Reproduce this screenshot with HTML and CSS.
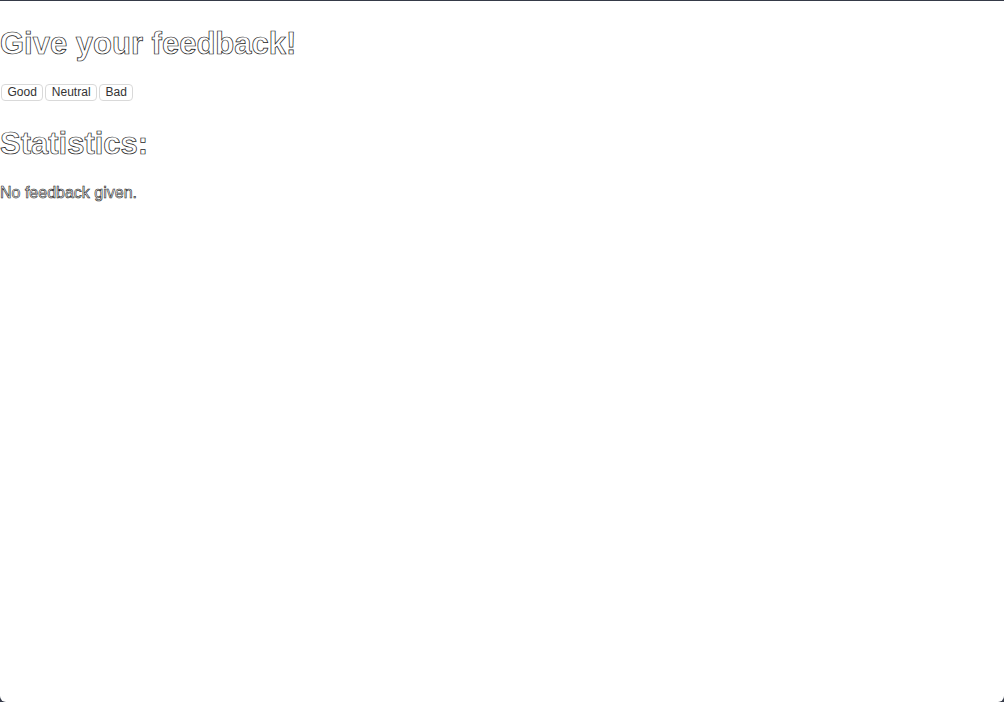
FILE: index.html
```html
<!DOCTYPE html>
<html>
<head>
<meta charset="utf-8">
<link rel="stylesheet" href="styles.css">
</head>
<body>
<div class="page">
  <h1 class="title">Give your feedback!</h1>
  <div class="buttons">
    <button class="btn">Good</button>
    <button class="btn">Neutral</button>
    <button class="btn">Bad</button>
  </div>
  <h1 class="title">Statistics:</h1>
  <p class="text">No feedback given.</p>
</div>
</body>
</html>
```
FILE: styles.css
```css
html, body {
  margin: 0;
  padding: 0;
  background: #353a48;
  height: 100%;
}
.page {
  margin-top: 1px;
  padding-top: 3px;
  height: 701px;
  box-sizing: border-box;
  background: #ffffff;
  border-radius: 0 0 6px 6px;
  overflow: hidden;
  font-family: "Liberation Sans", Arial, sans-serif;
  display: flow-root;
}
.title {
  font-size: 31px;
  font-weight: bold;
  margin: 21px 0 22px;
  color: #ffffff;
  -webkit-text-stroke: 0.7px #1a1a1a;
  line-height: 37px;
}
.buttons {
  display: flex;
  gap: 2px;
  padding-left: 1px;
  padding-bottom: 3px;
}
.btn {
  font-family: "Liberation Sans", Arial, sans-serif;
  font-size: 12px;
  color: #333;
  background: #fff;
  border: 1px solid #d9d9d9;
  border-radius: 4px;
  padding: 0 5.5px;
  height: 17px;
  line-height: 15px;
}
.text {
  font-size: 16px;
  margin: 15px 0;
  color: #ffffff;
  -webkit-text-stroke: 0.6px #1a1a1a;
}
```
